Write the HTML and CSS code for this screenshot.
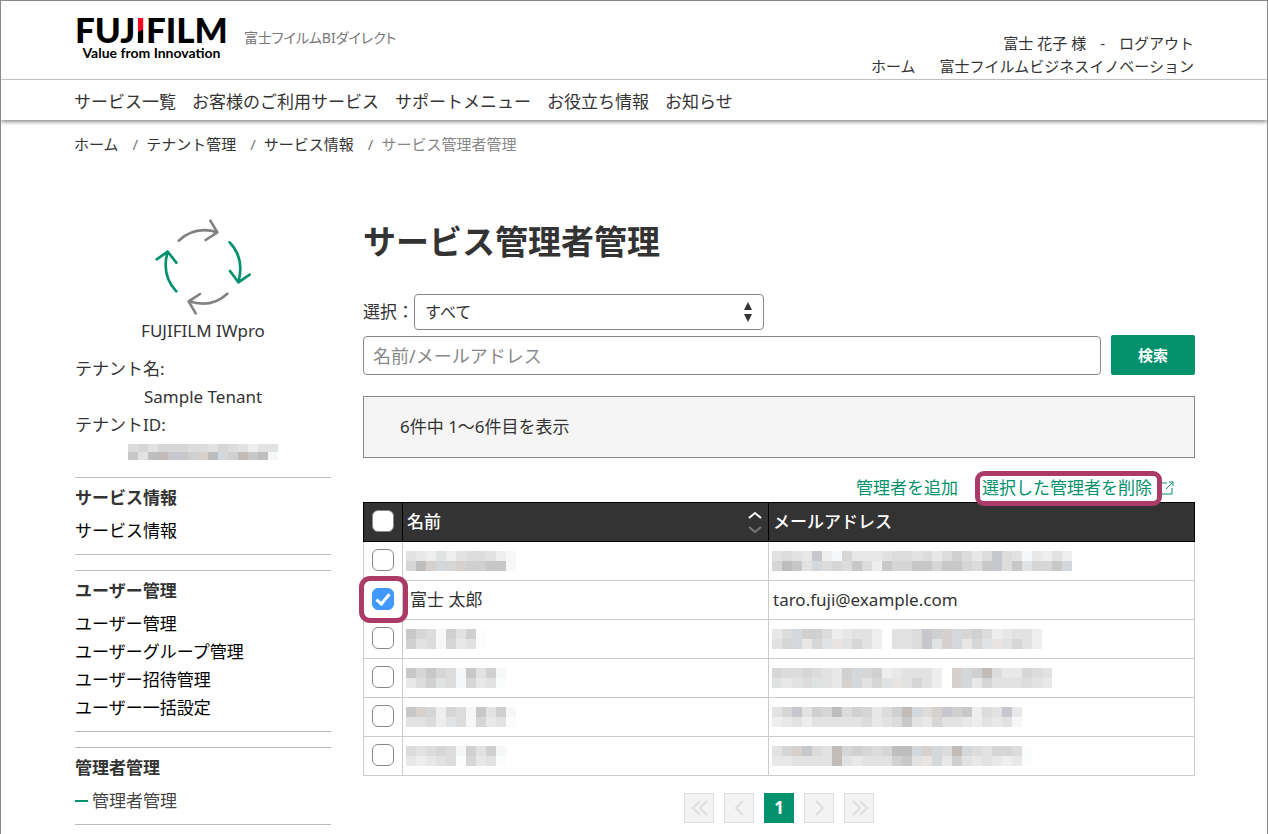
FILE: index.html
```
<!DOCTYPE html>
<html lang="ja">
<head>
    <meta charset="UTF-8">
    <title>サービス管理者管理</title>
    <link rel="stylesheet" href="styles.css">
</head>
<body>

<header class="header">
    <div class="brand">
        <a class="logo" href="#">
            <span class="logo-name">FUJ<span class="logo-i">I</span>FILM</span>
            <span class="logo-tag">Value from Innovation</span>
        </a>
        <span class="site-name">富士フイルムBIダイレクト</span>
    </div>
    <div class="user">
        <div class="user-row"><span>富士 花子 様</span><span>-</span><a href="#">ログアウト</a></div>
        <div class="user-row user-links"><a href="#">ホーム</a><a href="#">富士フイルムビジネスイノベーション</a></div>
    </div>
</header>

<nav class="nav">
    <a href="#">サービス一覧</a>
    <a href="#">お客様のご利用サービス</a>
    <a href="#">サポートメニュー</a>
    <a href="#">お役立ち情報</a>
    <a href="#">お知らせ</a>
</nav>

<ol class="breadcrumb">
    <li><a href="#">ホーム</a></li>
    <li><a href="#">テナント管理</a></li>
    <li><a href="#">サービス情報</a></li>
    <li>サービス管理者管理</li>
</ol>

<div class="wrap">
    <aside class="side">
        <div class="tenant">
            <svg class="tenant-icon" viewBox="279 54 300 297" fill="none" stroke-width="8" stroke-linecap="round" stroke-linejoin="round">
                <g stroke="#828282">
                    <path d="M356 122Q405 76 472 97M451 62L472 97L437 120"/>
                    <path d="M502 281Q455 325 387 304M420 282L386 304L407 340"/>
                </g>
                <g stroke="#01916d">
                    <path d="M509 127Q555 175 535 247M510 213L535 247L569 224"/>
                    <path d="M349 274Q303 225 323 155M290 178L323 155L349 188"/>
                </g>
            </svg>
            <div class="center">FUJIFILM IWpro</div>
            <dl class="tenant-info">
                <dt>テナント名:</dt>
                <dd>Sample Tenant</dd>
                <dt>テナントID:</dt>
                <dd><span class="mosaic" data-top="43533344534575f" data-bottom="150add2b0e2a108"></span></dd>
            </dl>
        </div>

        <section class="menu">
            <h2>サービス情報</h2>
            <ul>
                <li><a href="#">サービス情報</a></li>
            </ul>
        </section>
        <section class="menu">
            <h2>ユーザー管理</h2>
            <ul>
                <li><a href="#">ユーザー管理</a></li>
                <li><a href="#">ユーザーグループ管理</a></li>
                <li><a href="#">ユーザー招待管理</a></li>
                <li><a href="#">ユーザー一括設定</a></li>
            </ul>
        </section>
        <section class="menu">
            <h2>管理者管理</h2>
            <ul>
                <li><a class="current" href="#">管理者管理</a></li>
            </ul>
        </section>
    </aside>

    <main class="main">
        <h1>サービス管理者管理</h1>

        <form class="search">
            <div class="filter">
                <label for="filter">選択：</label>
                <div class="select">
                    <select id="filter">
                        <option>すべて</option>
                    </select>
                    <svg class="select-arrow" viewBox="0 0 8 20" fill="#333"><path d="M4 0L8 8H0zM4 20L0 12H8z"/></svg>
                </div>
            </div>
            <div class="keyword">
                <input type="text" placeholder="名前/メールアドレス" aria-label="名前/メールアドレス">
                <button type="button">検索</button>
            </div>
        </form>

        <div class="count">6件中 1～6件目を表示</div>

        <div class="actions">
            <a href="#">管理者を追加</a>
            <a class="delete" href="#">選択した管理者を削除<svg class="external" viewBox="0 0 14 14" fill="none" stroke="#01916d"><path d="M1 2H6M11 7V13H1M5 8L12 1M8 1H12V5"/></svg></a>
        </div>

        <table class="list">
            <thead>
                <tr>
                    <th class="check"><input type="checkbox" aria-label="すべて選択"></th>
                    <th class="name">
                        <div class="sort">名前
                            <svg viewBox="0 0 14 22" fill="none" stroke-width="2"><path stroke="#fff" d="M1 7L7 2L13 7"/><path stroke="#777" d="M1 16L7 21L13 16"/></svg>
                        </div>
                    </th>
                    <th>メールアドレス</th>
                </tr>
            </thead>
            <tbody>
                <tr>
                    <td class="check"><input type="checkbox" aria-label="1行目"></td>
                    <td><span class="mosaic" data-top="567f7544578" data-bottom="30be3b22118"></span></td>
                    <td><span class="mosaic" data-top="5456d78366654454642464d4586757" data-bottom="3015e43414713311311341d41f331e"></span></td>
                </tr>
                <tr>
                    <td class="check picked"><input type="checkbox" aria-label="富士 太郎" checked></td>
                    <td class="full-name">富士 太郎</td>
                    <td>taro.fuji@example.com</td>
                </tr>
                <tr>
                    <td class="check"><input type="checkbox" aria-label="3行目"></td>
                    <td><span class="mosaic" data-top="13482529" data-bottom="25483659"></span></td>
                    <td><span class="mosaic" data-top="64e22476557 554d2be32476557" data-bottom="53e63fc5357 554dfbe63fc5357"></span></td>
                </tr>
                <tr>
                    <td class="check"><input type="checkbox" aria-label="4行目"></td>
                    <td><span class="mosaic" data-top="1313481528" data-bottom="642f483659"></span></td>
                    <td><span class="mosaic" data-top="34434562e32765557 be2a466345" data-bottom="f654f56be53fc5357 be63555456"></span></td>
                </tr>
                <tr>
                    <td class="check"><input type="checkbox" aria-label="5行目"></td>
                    <td><span class="mosaic" data-top="1b373481528" data-bottom="5547f483659"></span></td>
                    <td><span class="mosaic" data-top="53d5230423642ae4bd21745d6" data-bottom="7657555554654156355675658"></span></td>
                </tr>
                <tr>
                    <td class="check"><input type="checkbox" aria-label="6行目"></td>
                    <td><span class="mosaic" data-top="4543482528" data-bottom="6765493659"></span></td>
                    <td><span class="mosaic" data-top="53bd45a3234300ebe4ae453349" data-bottom="665555af6555215ce625656769"></span></td>
                </tr>
            </tbody>
        </table>

        <div class="pager">
            <button type="button" disabled aria-label="最初"><svg viewBox="0 0 28 28"><path d="M15 7L8 14L15 21M22 7L15 14L22 21"/></svg></button>
            <button type="button" disabled aria-label="前へ"><svg viewBox="0 0 28 28"><path d="M18 7L11 14L18 21"/></svg></button>
            <button type="button" class="now">1</button>
            <button type="button" disabled aria-label="次へ"><svg viewBox="0 0 28 28"><path d="M11 7L18 14L11 21"/></svg></button>
            <button type="button" disabled aria-label="最後"><svg viewBox="0 0 28 28"><path d="M8 7L15 14L8 21M15 7L22 14L15 21"/></svg></button>
        </div>
    </main>
</div>

<script src="mosaic.js"></script>
</body>
</html>
```
FILE: styles.css
```
*,*::before,*::after{
    box-sizing: border-box;
}

body{
    margin: 0;
    min-height: 100vh;
    border: 1px solid #888;
    border-bottom: 0;
    background: #fff;
    color: #333;
    font: 17px/28px "Noto Sans", "Noto Sans CJK JP", sans-serif;
}

a{
    color: inherit;
    text-decoration: none;
}

ul,ol,dl,dd{
    margin: 0;
    padding: 0;
    list-style: none;
}

svg{
    display: block;
}

input,select,button{
    font: inherit;
    color: inherit;
}

/*header*/
.header{
    display: flex;
    justify-content: space-between;
    height: 79px;
    padding: 0 73px 0 74px;
    border-bottom: 1px solid #ccc;
}

.brand{
    display: flex;
    gap: 16px;
}

.logo{
    display: flex;
    flex-direction: column;
    align-items: center;
    padding-top: 11px;
    color: #000;
    font-family: Lato, sans-serif;
}

.logo-name{
    font-size: 35px;
    line-height: 34px;
    font-weight: 900;
}

.logo-i{
    background: linear-gradient(155deg, #ff0020 54%, #000 54%);
    background-clip: text;
    -webkit-background-clip: text;
    color: transparent;
}

.logo-tag{
    font-size: 14px;
    line-height: 14px;
    font-weight: 700;
}

.site-name{
    padding-top: 23px;
    font-size: 14px;
    font-feature-settings: "palt";
    color: #777;
}

.user{
    padding-top: 31px;
    font-size: 15px;
    line-height: 23px;
}

.user-row{
    display: flex;
    justify-content: flex-end;
    gap: 14px;
}

.user-links{
    gap: 24px;
}

.nav{
    display: flex;
    gap: 16px;
    padding: 4px 73px 0;
    line-height: 36px;
    box-shadow: 0 2px 4px rgba(0,0,0,.45);
}

.breadcrumb{
    display: flex;
    padding: 10px 73px 0;
    font-size: 15px;
}

.breadcrumb li:last-child{
    color: #888;
}

.breadcrumb li + li::before{
    content: "/";
    margin: 0 8px 0 14px;
    color: #777;
}

.wrap{
    display: flex;
    gap: 32px;
    padding: 60px 72px 0 74px;
}

/*sidebar*/
.side{
    flex: 0 0 256px;
}

.tenant{
    margin-bottom: 17px;
}

.tenant-icon{
    width: 100px;
    height: 99px;
    margin: 0 auto;
}

.center{
    text-align: center;
}

.tenant-info{
    margin-top: 10px;
}

.tenant-info dd{
    text-align: center;
}

.tenant-info .mosaic{
    margin: 5px auto 0;
    height: 16px;
}

.menu{
    margin-bottom: 15px;
    padding: 6px 0 9px;
    border: solid #bbb;
    border-width: 1px 0;
}

.menu:last-child{
    margin-bottom: 0;
}

.menu h2{
    margin: 0 0 5px;
    font-size: 17px;
    line-height: 28px;
}

.menu a{
    color: #000;
}

.menu .current{
    display: flex;
    align-items: center;
    gap: 4px;
    color: #444;
}

.menu .current::before{
    content: "";
    width: 13px;
    height: 2px;
    background: #01916d;
}

/*main*/
.main{
    flex: 1;
    min-width: 0;
}

h1{
    margin: 0 0 28px;
    font-size: 33px;
    line-height: 48px;
}

.filter{
    display: flex;
    align-items: center;
    margin-bottom: 5px;
}

.select{
    position: relative;
    width: 350px;
}

.select select{
    display: block;
    width: 100%;
    height: 36px;
    padding: 0 10px;
    border: 1px solid #888;
    border-radius: 4px;
    background: #fff;
    appearance: none;
    font-size: 16px;
}

.select-arrow{
    position: absolute;
    top: 8px;
    right: 12px;
    width: 8px;
    height: 20px;
    pointer-events: none;
}

.keyword{
    display: flex;
    align-items: flex-end;
    gap: 10px;
}

.keyword input{
    flex: 1;
    min-width: 0;
    height: 39px;
    padding: 0 9px;
    border: 1px solid #888;
    border-radius: 4px;
    font-size: 18px;
}

.keyword input::placeholder{
    color: #888;
}

.keyword button{
    width: 84px;
    height: 40px;
    padding: 0;
    border: 0;
    border-radius: 2px;
    background: #01916d;
    color: #fff;
    font-size: 15px;
    font-weight: 700;
}

.count{
    margin-top: 21px;
    padding: 16px 36px;
    border: 1px solid #888;
    background: #f5f5f5;
}

.actions{
    display: flex;
    justify-content: flex-end;
    gap: 24px;
    margin-top: 16px;
    padding-right: 20px;
    color: #01916d;
}

.delete{
    position: relative;
    display: flex;
    align-items: center;
    gap: 9px;
}

.delete::after{
    content: "";
    position: absolute;
    z-index: 1;
    top: -3px;
    left: -7px;
    right: 13px;
    height: 35px;
    border: 5px solid #ab3a68;
    border-radius: 9px;
}

.external{
    width: 14px;
    height: 14px;
}

.list{
    width: 100%;
    border-collapse: collapse;
    table-layout: fixed;
}

.list th,.list td{
    height: 39px;
    padding: 0 4px;
    border: 1px solid #ccc;
    text-align: left;
}

.list th{
    border-color: #000;
    background: #333;
    color: #fff;
    font-weight: 500;
}

.list .check{
    position: relative;
    width: 39px;
    padding: 0 8px 2px;
}

.list .name{
    width: 366px;
}

.list .full-name{
    padding-left: 7px;
}

.sort{
    display: flex;
    align-items: center;
    justify-content: space-between;
    padding-right: 2px;
}

.sort svg{
    width: 14px;
    height: 22px;
}

.check input{
    display: block;
    width: 22px;
    height: 22px;
    margin: 0 auto;
    border: 1px solid #888;
    border-radius: 6px;
    background: #fff;
    appearance: none;
}

.check input:checked{
    border-color: #4199ff;
    background: #4199ff;
}

.check input:checked::after{
    content: "";
    display: block;
    width: 8px;
    height: 14px;
    margin: 2px auto 0;
    border: solid #fff;
    border-width: 0 3px 3px 0;
    transform: rotate(40deg);
}

.picked::after{
    content: "";
    position: absolute;
    z-index: 1;
    top: -5px;
    left: -5px;
    width: 49px;
    height: 47px;
    border: 5px solid #ab3a68;
    border-radius: 11px;
}

.mosaic{
    display: block;
    width: max-content;
    height: 20px;
}

.list .mosaic{
    margin-left: -1px;
}

.mosaic svg{
    height: 100%;
}

.pager{
    display: flex;
    justify-content: center;
    align-items: flex-end;
    gap: 10px;
    margin-top: 17px;
}

.pager button{
    width: 30px;
    height: 30px;
    padding: 0;
    border: 1px solid #ddd;
    background: #f3f3f3;
}

.pager svg{
    width: 28px;
    height: 28px;
    fill: none;
    stroke: #ddd;
    stroke-width: 2;
}

.pager .now{
    border-color: #01916d;
    background: #01916d;
    color: #fff;
    font-weight: 700;
}
```
FILE: mosaic.js
```
// masked values: two rows of blocks, one palette key per block
const palette = {
    0:'#bebebe', 1:'#c8c8c8', 2:'#d0d0d0', 3:'#d6d6d6', 4:'#dcdcdc',
    5:'#e2e2e2', 6:'#e8e8e8', 7:'#eeeeee', 8:'#f6f7f8', 9:'#fbfdfd',
    a:'#c2bcb8', b:'#d6d1cc', c:'#e9e4e2', d:'#c6c8cd', e:'#d3d8dc', f:'#dfe3e3'
};

document.querySelectorAll('.mosaic').forEach((box)=>{
    let rows = [box.dataset.top, box.dataset.bottom];
    let width = Math.max(rows[0].length, rows[1].length) * 10;
    let rects = '';
    rows.forEach((row,y)=>{
        Array.from(row).forEach((key,x)=>{
            if(palette[key]){
                rects += `<rect x="${x*10}" y="${y*10}" width="10" height="10" fill="${palette[key]}"/>`;
            }
        });
    });
    box.innerHTML = `<svg width="${width}" viewBox="0 0 ${width} 20" preserveAspectRatio="none" shape-rendering="crispEdges">${rects}</svg>`;
});
```
